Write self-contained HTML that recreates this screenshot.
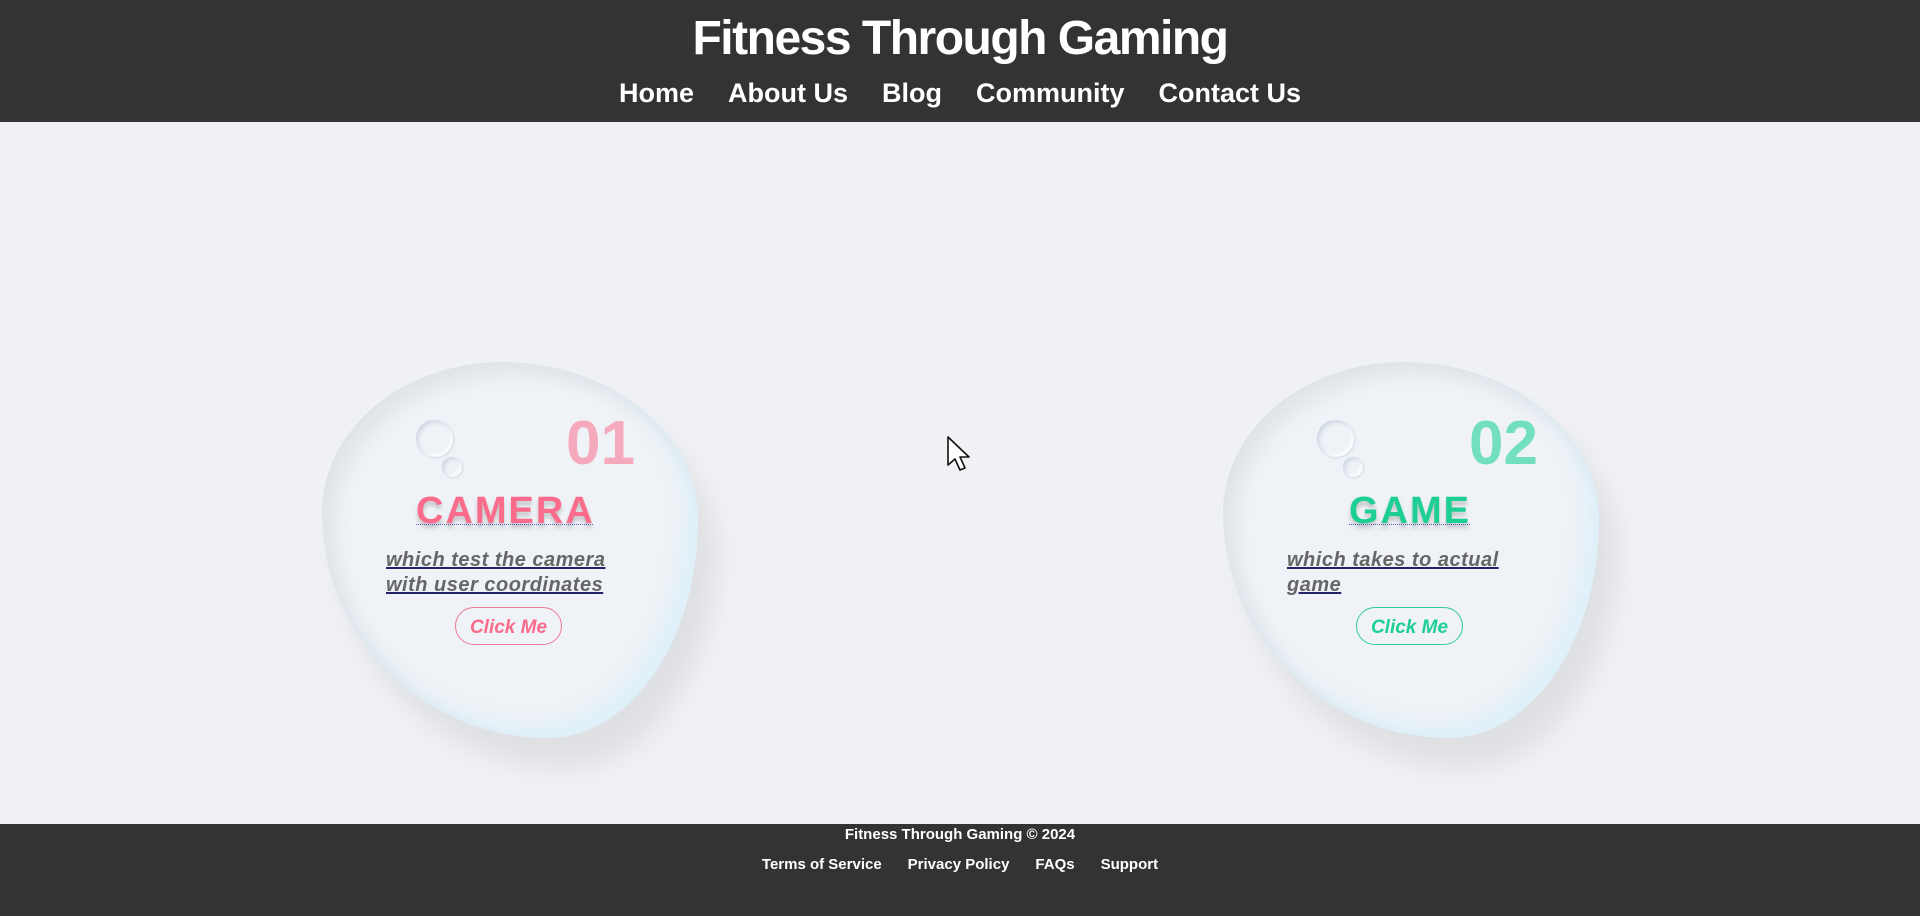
<!DOCTYPE html>
<html><head><meta charset="utf-8"><style>
*{margin:0;padding:0;box-sizing:border-box}
html,body{width:1920px;height:916px;overflow:hidden;background:#eff1f5;font-family:"Liberation Sans",sans-serif}
header{position:absolute;left:0;top:0;width:1920px;height:122px;background:#333;color:#fff;text-align:center}
header h1{position:absolute;left:0;right:0;top:11px;font-size:48px;font-weight:bold;letter-spacing:-1.5px}
nav{position:absolute;left:0;right:0;top:78px;font-size:27px;font-weight:bold}
nav span{margin:0 17px}
footer{position:absolute;left:0;top:824px;width:1920px;height:92px;background:#333;color:#fff;text-align:center;font-weight:bold;font-size:15px}
footer .c{position:absolute;left:0;right:0;top:2px}
footer .l{position:absolute;left:0;right:0;top:32px}
footer .l span{margin:0 13px}
.blob{position:absolute;width:376px;height:376px;background:#eff2f6;
border-radius:48% 52% 40% 60% / 40% 42% 58% 60%;
box-shadow:inset 12px 12px 20px rgba(0,0,0,.06),inset -12px -12px 20px rgba(220,240,250,.9),18px 30px 28px rgba(0,0,0,.07)}
.b1{left:322px;top:362px}
.b2{left:1223px;top:362px}
.bub{position:absolute;border-radius:50%;box-shadow:inset 2px 2px 4px rgba(150,170,200,.4),inset -2px -2px 3px #fff,1px 1px 2px rgba(150,170,200,.3)}
.num{position:absolute;top:46px;font-size:62px;font-weight:bold}
.ttl{position:absolute;font-size:38px;font-weight:bold;letter-spacing:2px;text-shadow:0 4px 4px rgba(0,0,0,.2);text-decoration:underline dotted rgba(0,0,170,.6) 1px}
.desc{position:absolute;left:64px;top:186px;font-size:20px;letter-spacing:.5px;font-weight:bold;font-style:italic;color:#666;line-height:25px;text-decoration:underline;text-decoration-color:#226}
.btn{position:absolute;left:133px;top:245px;width:107px;height:38px;border-radius:19px;text-align:center;line-height:40px;font-size:19px;font-weight:bold;font-style:italic}
</style></head><body>
<header><h1>Fitness Through Gaming</h1>
<nav><span>Home</span><span>About Us</span><span>Blog</span><span>Community</span><span>Contact Us</span></nav></header>

<div class="blob b1">
<div class="bub" style="left:94px;top:58px;width:37px;height:37px"></div>
<div class="bub" style="left:120px;top:95px;width:20px;height:20px"></div>
<div class="num" style="left:244px;color:#f5a9bd">01</div>
<div class="ttl" style="left:94px;top:128px;color:#fb6b8b">CAMERA</div>
<div class="desc">which test the camera<br>with user coordinates</div>
<div class="btn" style="border:1px solid #f07a95;color:#fb6b8b">Click Me</div>
</div>

<div class="blob b2">
<div class="bub" style="left:94px;top:58px;width:37px;height:37px"></div>
<div class="bub" style="left:120px;top:95px;width:20px;height:20px"></div>
<div class="num" style="left:246px;color:#72dfbe">02</div>
<div class="ttl" style="left:126px;top:128px;color:#1dcf93">GAME</div>
<div class="desc">which takes to actual<br>game</div>
<div class="btn" style="border:1px solid #33cc99;color:#1dcf93">Click Me</div>
</div>

<svg style="position:absolute;left:946px;top:435px" width="26" height="40" viewBox="0 0 26 40"><path d="M2 2 L2 30 L9 24 L14 35 L19 33 L14 22 L23 22 Z" fill="#fff" stroke="#111" stroke-width="1.6" stroke-linejoin="round"/></svg>

<footer><div class="c">Fitness Through Gaming © 2024</div>
<div class="l"><span>Terms of Service</span><span>Privacy Policy</span><span>FAQs</span><span>Support</span></div></footer>
</body></html>
